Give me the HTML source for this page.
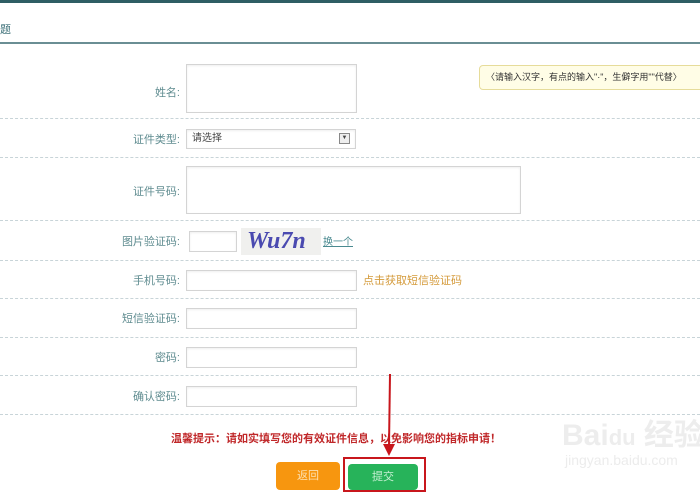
<!DOCTYPE html>
<html><head><meta charset="utf-8"><style>
*{margin:0;padding:0;box-sizing:border-box}
body{width:700px;height:490px;background:#fff;position:relative;overflow:hidden;font-family:"Liberation Sans","Noto Sans CJK SC",sans-serif;font-size:11px}
.a{position:absolute}
.dot{position:absolute;left:0;width:700px;border-top:1px dashed #c8d4d8}
.lb{position:absolute;right:520px;color:#5f8c90;font-size:11px;white-space:nowrap}
.in{position:absolute;border:1px solid #d4d4d4;background:#fff;box-shadow:inset 0 1px 2px #eee}
</style></head><body>
<div class="a" style="left:0;top:0;width:700px;height:3px;background:#2f5e64"></div>
<div class="a" style="left:0;top:21px;color:#3c7078;font-size:11px">题</div>
<div class="a" style="left:0;top:42px;width:700px;height:2px;background:#6a8e94"></div>

<div class="in" style="left:186px;top:64px;width:171px;height:49px"></div>
<div class="lb" style="top:84px">姓名:</div>
<div class="a" style="left:479px;top:65px;width:225px;height:25px;background:#fffde6;border:1px solid #e6dc9a;border-radius:4px;font-size:9px;line-height:23px;padding-left:6px;color:#333">〈请输入汉字，有点的输入"·"，生僻字用""代替〉</div>
<div class="dot" style="top:118px"></div>

<div class="lb" style="top:131px">证件类型:</div>
<div class="in" style="left:186px;top:129px;width:170px;height:20px;font-size:10px;line-height:18px;padding-left:5px;color:#444">请选择<span class="a" style="right:5px;top:3px;width:11px;height:11px;border:1px solid #888;background:#eee;font-size:6px;line-height:9px;text-align:center">▼</span></div>
<div class="dot" style="top:157px"></div>

<div class="lb" style="top:183px">证件号码:</div>
<div class="in" style="left:186px;top:166px;width:335px;height:48px"></div>
<div class="dot" style="top:220px"></div>

<div class="lb" style="top:233px">图片验证码:</div>
<div class="in" style="left:189px;top:231px;width:48px;height:21px"></div>
<div class="a" style="left:241px;top:228px;width:80px;height:27px;background:#f0f0ee;color:#4a4ab0;font-family:'Liberation Serif',serif;font-size:24px;font-weight:bold;font-style:italic;line-height:27px;padding-left:6px">Wu7n</div>
<div class="a" style="left:323px;top:233px;color:#4a8a90;font-size:10px;text-decoration:underline">换一个</div>
<div class="dot" style="top:260px"></div>

<div class="lb" style="top:272px">手机号码:</div>
<div class="in" style="left:186px;top:270px;width:171px;height:21px"></div>
<div class="a" style="left:363px;top:272px;color:#d49a3a;font-size:11px">点击获取短信验证码</div>
<div class="dot" style="top:298px"></div>

<div class="lb" style="top:310px">短信验证码:</div>
<div class="in" style="left:186px;top:308px;width:171px;height:21px"></div>
<div class="dot" style="top:337px"></div>

<div class="lb" style="top:349px">密码:</div>
<div class="in" style="left:186px;top:347px;width:171px;height:21px"></div>
<div class="dot" style="top:375px"></div>

<div class="lb" style="top:388px">确认密码:</div>
<div class="in" style="left:186px;top:386px;width:171px;height:21px"></div>
<div class="dot" style="top:414px"></div>

<div class="a" style="left:171px;top:430px;color:#c0282a;font-weight:bold;font-size:11px;white-space:nowrap">温馨提示：请如实填写您的有效证件信息，以免影响您的指标申请！</div>

<div class="a" style="left:276px;top:462px;width:64px;height:28px;background:#f7960f;border-radius:4px;color:#fde0b0;text-align:center;line-height:28px">返回</div>
<div class="a" style="left:348px;top:464px;width:70px;height:26px;background:#27b35a;border-radius:4px;color:#c8f0d4;text-align:center;line-height:26px">提交</div>
<div class="a" style="left:343px;top:457px;width:83px;height:35px;border:2px solid #c8161c"></div>
<svg class="a" style="left:380px;top:374px" width="20" height="84"><line x1="10" y1="0" x2="9" y2="72" stroke="#c8161c" stroke-width="2"/><polygon points="3,70 15,70 9,82" fill="#c8161c"/></svg>

<div class="a" style="left:562px;top:410px;color:#ededed;font-size:30px;font-weight:bold;white-space:nowrap">Bai<span style="font-size:22px">du</span> 经验</div>
<div class="a" style="left:565px;top:452px;color:#ececec;font-size:14px;white-space:nowrap">jingyan.baidu.com</div>
</body></html>
